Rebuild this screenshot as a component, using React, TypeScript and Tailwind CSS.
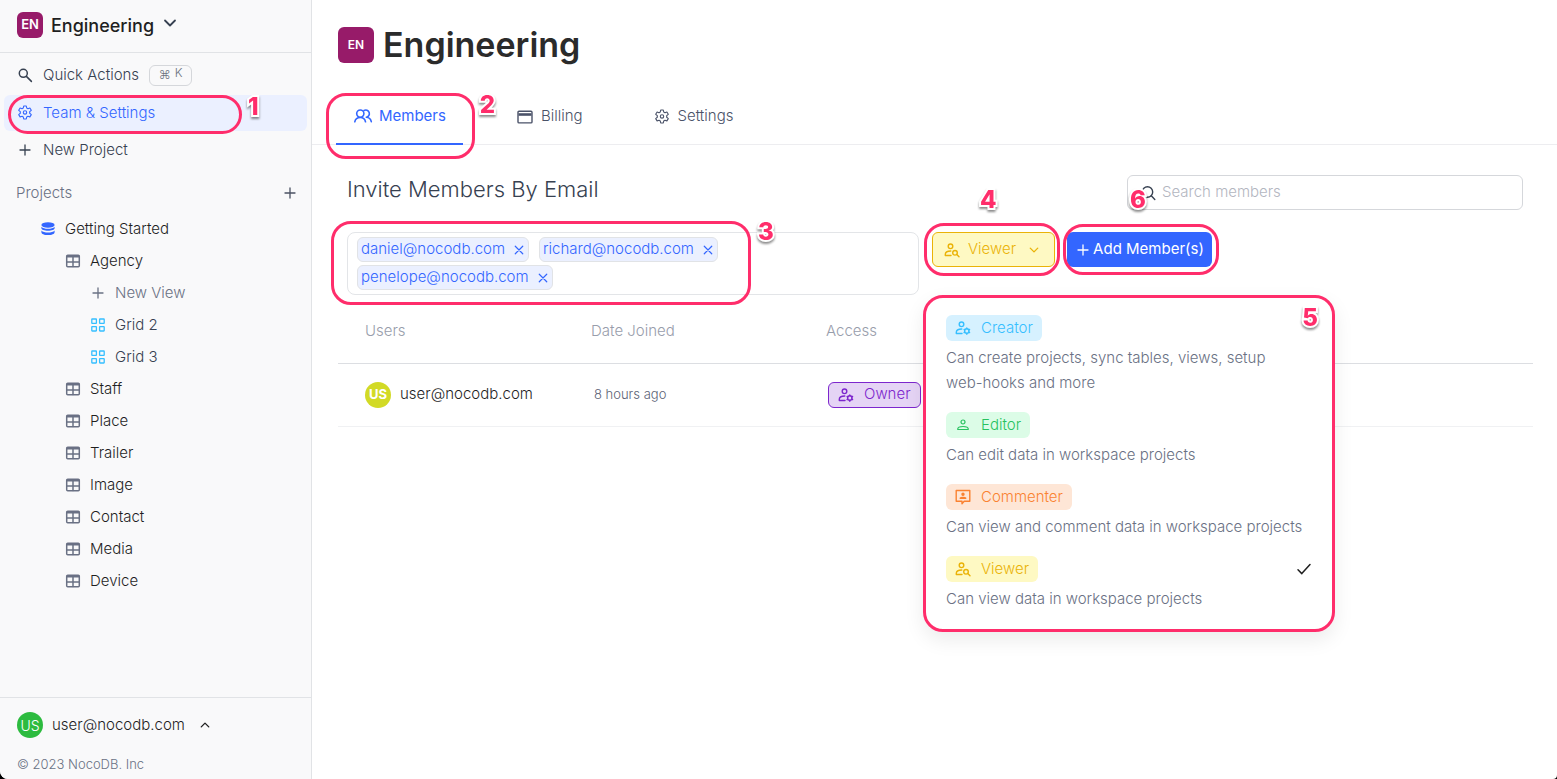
import type { ReactNode } from "react";

type IconProps = { className?: string };

function Stroke({ className = "size-4", children, w = 1.3 }: IconProps & { children: ReactNode; w?: number }) {
  return (
    <svg viewBox="0 0 16 16" fill="none" stroke="currentColor" strokeWidth={w} strokeLinecap="round" strokeLinejoin="round" className={"shrink-0 " + className} aria-hidden="true">
      {children}
    </svg>
  );
}

const GEAR =
  "M6.7 1h2.6l.4 2 1.3.7 1.9-.7 1.4 2.300-1.600 1.400v1.600l1.600 1.300-1.400 2.300-1.900-.700-1.300.800-.400 2H6.700l-.400-2-1.300-.800-1.900.700-1.400-2.300 1.600-1.300V6.700L1.700 5.300l1.400-2.300 1.900.700 1.300-.700z";

const Gear = (p: IconProps) => (
  <Stroke {...p} w={1.1}>
    <path d={GEAR} />
    <circle cx="8" cy="7.400" r="1.700" />
  </Stroke>
);
const Plus = (p: IconProps) => (
  <Stroke {...p}>
    <path d="M8 3v10M3 8h10" />
  </Stroke>
);
const Cross = (p: IconProps) => (
  <Stroke {...p} w={1.6}>
    <path d="M3 3l10 10M13 3L3 13" />
  </Stroke>
);
const ChevronDown = (p: IconProps) => (
  <Stroke {...p} w={1.8}>
    <path d="M3 5.5l5 5 5-5" />
  </Stroke>
);
const ChevronUp = (p: IconProps) => (
  <Stroke {...p} w={1.8}>
    <path d="M3 10.5l5-5 5 5" />
  </Stroke>
);
const Check = (p: IconProps) => (
  <Stroke {...p} w={1.5}>
    <path d="M2 8.8l3.8 3.8L14 3.5" />
  </Stroke>
);
const SearchBold = (p: IconProps) => (
  <Stroke {...p} w={1.5}>
    <circle cx="6.3" cy="6.3" r="4" />
    <path d="M9.4 9.4l5 5" />
  </Stroke>
);
const Search = (p: IconProps) => (
  <Stroke {...p} w={1.4}>
    <circle cx="7.5" cy="7" r="5.2" />
    <path d="M11.3 10.8l3.5 3.7" />
  </Stroke>
);
const TableIcon = (p: IconProps) => (
  <Stroke {...p} w={1.5}>
    <rect x="1.7" y="2.2" width="12.6" height="11.6" rx="1" />
    <path d="M2 3.4h12" strokeWidth="2" />
    <path d="M2 8.9h12M8 4v9.5" />
  </Stroke>
);
const GridIcon = (p: IconProps) => (
  <Stroke {...p}>
    <rect x="1.8" y="2" width="4.6" height="4.4" rx=".4" />
    <rect x="9.6" y="2" width="4.6" height="4.4" rx=".4" />
    <rect x="1.8" y="9.6" width="4.6" height="4.4" rx=".4" />
    <rect x="9.6" y="9.6" width="4.6" height="4.4" rx=".4" />
  </Stroke>
);
const Database = () => (
  <svg viewBox="0 0 16 16" fill="currentColor" className="size-4 shrink-0 text-[#3366ff]" aria-hidden="true">
    <ellipse cx="8" cy="4" rx="6.6" ry="2.7" />
    <path d="M1.4 5.7c1.2 1.4 3.8 2 6.6 2s5.4-.6 6.6-2v1.500c0 1.500-3 2.500-6.600 2.500s-6.600-1-6.600-2.500z" />
    <path d="M1.4 9.600c1.200 1.400 3.800 2 6.600 2s5.400-.6 6.600-2v1.600c0 1.700-3 2.900-6.600 2.900s-6.600-1.200-6.600-2.900z" />
  </svg>
);
const Card = (p: IconProps) => (
  <Stroke {...p} w={1.4}>
    <rect x="1" y="2.3" width="14" height="11.6" rx="1" />
    <path d="M1.500 5.500h13" strokeWidth="2.600" strokeLinecap="butt" />
  </Stroke>
);
const People = () => (
  <svg viewBox="0 0 20 16" fill="none" stroke="currentColor" strokeWidth="1.6" strokeLinecap="round" strokeLinejoin="round" className="h-4 w-5 shrink-0" aria-hidden="true">
    <circle cx="7.300" cy="5.600" r="3.600" />
    <path d="M1.800 13.800c.5-2.700 2.600-4.300 5.500-4.300s4.700 1.600 5.200 4.300M11 2.500a3.600 3.600 0 1 1 2.300 6.700c2.700.2 4.500 1.800 5 4.400" />
  </svg>
);
const UserGear = (p: IconProps) => (
  <Stroke {...p} w={1.4}>
    <circle cx="6.5" cy="4.3" r="2.3" />
    <path d="M7 13.5H1.300v-1.300C1.300 10 4 9 6.800 9" />
    <circle cx="11.800" cy="11" r="2.200" />
    <path d="M11.800 7.900v.7M11.800 13.400v.8M9.100 9.500l.6.300M13.900 12.200l.7.400M9.100 12.600l.6-.4M13.900 9.800l.7-.4" />
  </Stroke>
);
const UserSearch = (p: IconProps) => (
  <Stroke {...p} w={1.4}>
    <circle cx="6.5" cy="4.3" r="2.3" />
    <path d="M7 13.5H1.300v-1.300C1.300 10 4 9 6.800 9" />
    <circle cx="11" cy="10.800" r="2.300" />
    <path d="M12.800 12.600l2.200 2.200" />
  </Stroke>
);
const User = (p: IconProps) => (
  <Stroke {...p} w={1.2}>
    <circle cx="8" cy="5" r="2" />
    <path d="M2.800 12.500v-.7C2.800 10.200 5.500 9.500 8 9.500s5.200.7 5.200 2.300v.7z" />
  </Stroke>
);
const UserComment = (p: IconProps) => (
  <Stroke {...p} w={1.4}>
    <path d="M1.200 1.500h13.600v10.800H9.200L7 14.800v-2.500H1.200z" />
    <circle cx="8" cy="5.200" r="1" fill="currentColor" />
    <path d="M5.200 9.200c.7-1 4.900-1 5.600 0z" fill="currentColor" />
  </Stroke>
);

/* Tutorial call-outs */
const Ring = ({ className }: { className: string }) => (
  <span aria-hidden="true" className={"pointer-events-none absolute z-20 rounded-[20px] border-3 border-[#ff2d6b] " + className} />
);
const Step = ({ n, className }: { n: number; className: string }) => (
  <span
    className={
      "pointer-events-none absolute z-30 font-['Inter',sans-serif] text-[24px] leading-6 font-extrabold text-[#ff2d6b] [-webkit-text-stroke:4px_white] [paint-order:stroke_fill] drop-shadow-[0_2px_1px_rgba(0,0,0,0.45)] " +
      className
    }
  >
    {n}
  </span>
);

const tables = ["Staff", "Place", "Trailer", "Image", "Contact", "Media", "Device"];
const emails = ["daniel@nocodb.com", "richard@nocodb.com", "penelope@nocodb.com"];
const roles = [
  { name: "Creator", icon: UserGear, color: "bg-[#d6f1ff] text-[#36bfff]", text: "Can create projects, sync tables, views, setup\nweb-hooks and more" },
  { name: "Editor", icon: User, color: "bg-[#dcfce7] text-[#27c25f]", text: "Can edit data in workspace projects" },
  { name: "Commenter", icon: UserComment, color: "bg-[#fee6d6] text-[#fa8231]", text: "Can view and comment data in workspace projects" },
  { name: "Viewer", icon: UserSearch, color: "bg-[#fef9c3] text-[#eab308]", text: "Can view data in workspace projects", selected: true },
];

function Sidebar() {
  return (
    <aside className="flex w-78 shrink-0 flex-col border-r border-[#e1e3e6] bg-[#f9f9fa]">
      <button className="flex h-[53px] items-center border-b border-[#e1e3e6] pb-0.5 pl-[17px] text-left">
        <span className="flex size-[26px] items-center justify-center rounded-md bg-[#971b69] text-[13px] font-semibold text-white">EN</span>
        <span className="ml-2 text-[18px] font-medium text-[#1f1f1f]">Engineering</span>
        <ChevronDown className="mb-1 ml-2 size-4 text-[#374151]" />
      </button>
      <nav className="flex flex-col gap-0.5 px-1 pt-1 text-[15px] text-[#374151]">
        <button className="flex h-9 items-center pl-[13px]">
          <SearchBold />
          <span className="ml-2.5">Quick Actions</span>
          <span className="ml-2.5 flex h-[21px] w-[43px] items-center justify-center gap-1 rounded-md border border-[#d5d7db] text-[12px] text-[#6b7280]">
            <span>⌘</span>
            <span className="pb-1">K</span>
          </span>
        </button>
        <div className="relative">
          <a href="#team" className="flex h-9 items-center gap-2.5 rounded-md bg-[#ebf0ff] pl-[13px] text-[#3366ff]">
            <Gear />
            Team &amp; Settings
          </a>
          <Ring className="top-0 left-1 h-[39px] w-[234px]" />
          <Step n={1} className="top-0 left-61" />
        </div>
        <button className="flex h-9 items-center gap-2.5 pb-0.5 pl-[13px]">
          <Plus />
          New Project
        </button>
      </nav>
      <div className="mt-1.5 flex h-9 items-center justify-between pr-[13px] pl-4 text-[15px] text-[#6a7184]">
        <h2>Projects</h2>
        <button aria-label="Add project" className="text-[#4b5263]">
          <Plus />
        </button>
      </div>
      <ul className="mt-0.5 text-[15px] text-[#1f1f1f]">
        <li className="flex h-8 items-center gap-[9px] pl-10">
          <Database />
          Getting Started
        </li>
        <li className="flex h-8 items-center gap-[9px] pl-[65px]">
          <TableIcon className="size-4 text-[#6a7184]" />
          Agency
        </li>
        <li>
          <button className="flex h-8 items-center gap-[9px] pl-[90px] text-[#6a7184]">
            <Plus />
            New View
          </button>
        </li>
        {["Grid 2", "Grid 3"].map((v) => (
          <li key={v} className="flex h-8 items-center gap-[9px] pl-[90px] text-[#374151]">
            <GridIcon className="size-4 text-[#36bfff]" />
            {v}
          </li>
        ))}
        {tables.map((t) => (
          <li key={t} className="flex h-8 items-center gap-[9px] pl-[65px]">
            <TableIcon className="size-4 text-[#6a7184]" />
            {t}
          </li>
        ))}
      </ul>
      <footer className="mt-auto border-t border-[#e1e3e6] pt-3.5 pb-[5px] pl-[17px]">
        <button className="flex items-center text-[15px] text-[#1f1f1f]">
          <span className="flex size-[26px] items-center justify-center rounded-full bg-[#2dbb3f] text-[14px] text-white">US</span>
          <span className="ml-[9px]">user@nocodb.com</span>
          <ChevronUp className="ml-3.5 size-3" />
        </button>
        <p className="mt-4 text-[13px] leading-5 text-[#6a7184]">© 2023 NocoDB. Inc</p>
      </footer>
    </aside>
  );
}

function RoleMenu() {
  return (
    <div className="absolute top-[63px] -left-[9px] z-20 w-[412px] rounded-[20px] border-3 border-[#ff2d6b] bg-white px-5 pt-[17px] pb-[18px] shadow-[0_8px_20px_rgba(0,0,0,0.08)]">
      <Step n={5} className="top-2 right-3.5" />
      <ul role="listbox" aria-label="Role" className="flex flex-col gap-[17px]">
        {roles.map(({ name, icon: Icon, color, text, selected }) => (
          <li key={name} role="option" aria-selected={!!selected}>
            <div className="flex items-center justify-between">
              <span className={"flex h-[26px] items-center gap-2.5 rounded-md px-[9px] text-[15px] " + color}>
                <Icon />
                {name}
              </span>
              {selected && <Check className="size-4 text-[#1f1f1f]" />}
            </div>
            <p className="mt-1 text-[15px] leading-[25px] whitespace-pre-line text-[#6a7184]">{text}</p>
          </li>
        ))}
      </ul>
    </div>
  );
}

export default function App() {
  return (
    <div className="bg-black">
      <div className="flex min-h-screen overflow-hidden rounded-br-sm rounded-bl-lg bg-white font-['Inter','Noto_Sans',sans-serif] font-light text-[#374151]">
        <Sidebar />
        <main className="min-w-0 flex-1">
          <header className="flex h-[89px] items-center gap-[9px] pl-[26px]">
            <span className="flex size-9 items-center justify-center rounded-md bg-[#971b69] text-[12px] font-semibold text-white">EN</span>
            <h1 className="text-[34px] font-semibold text-[#2b2b2b]">Engineering</h1>
          </header>
          <nav className="flex h-14 items-stretch gap-[37px] border-b border-[#ededf0] pl-6 text-[15px] text-[#4a5268]">
            <div className="relative flex">
              <a href="#members" className="-mb-px flex items-center gap-1.5 border-b-2 border-[#3366ff] px-[17px] font-normal text-[#3366ff]">
                <People />
                Members
              </a>
              <Ring className="top-1 -right-3 -left-2.5 h-[66px]" />
              <Step n={2} className="top-1 -right-8" />
            </div>
            <a href="#billing" className="flex items-center gap-2 px-[17px]">
              <Card />
              Billing
            </a>
            <a href="#settings" className="flex items-center gap-2 px-[17px]">
              <Gear />
              Settings
            </a>
          </nav>
          <section className="pt-[30px] pr-6 pl-[26px]">
            <div className="flex items-start justify-between pr-2.5 pl-[9px]">
              <h2 className="text-[22px] leading-7">Invite Members By Email</h2>
              <label className="relative flex h-[35px] w-[396px] items-center gap-1.5 rounded-md border border-[#d5d7db] pl-3">
                <Search />
                <input aria-label="Search members" placeholder="Search members" className="min-w-0 flex-1 text-[15px] outline-none placeholder:text-[#b3b6bf]" />
                <Step n={6} className="top-3 left-0.5" />
              </label>
            </div>
            <div className="mt-[22px] flex items-start pl-[9px]">
              <div className="relative w-[572px]">
                <div className="flex flex-wrap gap-x-2.5 gap-y-[3px] rounded-lg border border-[#e3e5e8] py-1 pr-40 pl-[9px]">
                  {emails.map((e) => (
                    <span key={e} className="flex h-[25px] items-center gap-2 rounded-md border border-[#e1e3e6] bg-[#ebf0ff] px-[3px] text-[15px] text-[#3366ff]">
                      {e}
                      <button aria-label={"Remove " + e}>
                        <Cross className="size-3" />
                      </button>
                    </span>
                  ))}
                </div>
                <Ring className="-top-[11px] -left-4 h-[84px] w-[420px]" />
                <Step n={3} className="-top-3 left-[411px]" />
              </div>
              <div className="relative ml-[13px]">
                <button className="flex h-[35px] w-[123px] items-center gap-2 rounded-md border border-[#eab308] bg-[#fef9c3] pl-[11px] text-[15px] text-[#eab308]">
                  <UserSearch />
                  Viewer
                  <ChevronDown className="ml-1 size-3" />
                </button>
                <Ring className="-inset-y-[9px] -right-[5px] -left-2" />
                <Step n={4} className="-top-11 left-12" />
                <RoleMenu />
              </div>
              <div className="relative ml-3">
                <button className="flex h-[35px] w-[145px] items-center justify-center gap-0.5 rounded-md bg-[#3366ff] text-[15px] font-normal text-white">
                  <Plus />
                  Add Member(s)
                </button>
                <Ring className="-inset-y-2 -right-[7px] -left-1" />
              </div>
            </div>
            <table className="mt-[5px] w-full table-fixed text-left">
              <colgroup>
                <col className="w-[226px]" />
                <col className="w-[235px]" />
                <col />
              </colgroup>
              <thead>
                <tr className="h-[63px] border-b border-[#dcdee2] text-[15px] text-[#989dab]">
                  <th className="pl-[27px] font-light">Users</th>
                  <th className="pl-[27px] font-light">Date Joined</th>
                  <th className="pl-[27px] font-light">Access</th>
                </tr>
              </thead>
              <tbody>
                <tr className="h-[63px] border-b border-[#f0f1f3]">
                  <td className="pl-[27px]">
                    <div className="flex items-center gap-[9px] text-[15px] whitespace-nowrap text-[#1f1f1f]">
                      <span className="flex size-[26px] items-center justify-center rounded-full bg-[#d2da26] text-[13px] font-bold text-white">US</span>
                      user@nocodb.com
                    </div>
                  </td>
                  <td className="pl-[30px] text-[13px] text-[#5b6275]">8 hours ago</td>
                  <td className="pl-[29px]">
                    <span className="flex h-[26px] w-[93px] items-center gap-2.5 rounded-md border border-[#7d26cd] bg-[#e5d4f5] pl-[9px] text-[15px] text-[#7d26cd]">
                      <UserGear />
                      Owner
                    </span>
                  </td>
                </tr>
              </tbody>
            </table>
          </section>
        </main>
      </div>
    </div>
  );
}
